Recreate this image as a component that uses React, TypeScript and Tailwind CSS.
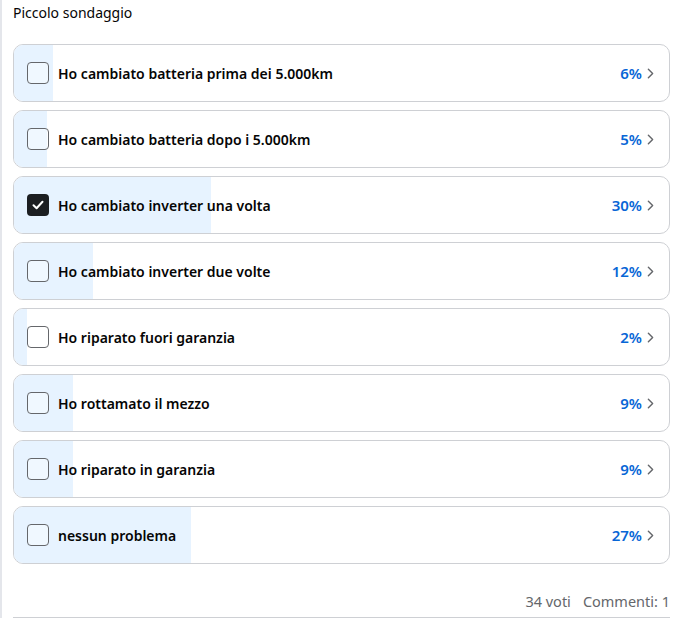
import { ChevronRight } from 'lucide-react';

interface PollOption {
  label: string;
  percent: number;
  checked?: boolean;
}

const options: PollOption[] = [
  { label: 'Ho cambiato batteria prima dei 5.000km', percent: 6 },
  { label: 'Ho cambiato batteria dopo i 5.000km', percent: 5 },
  { label: 'Ho cambiato inverter una volta', percent: 30, checked: true },
  { label: 'Ho cambiato inverter due volte', percent: 12 },
  { label: 'Ho riparato fuori garanzia', percent: 2 },
  { label: 'Ho rottamato il mezzo', percent: 9 },
  { label: 'Ho riparato in garanzia', percent: 9 },
  { label: 'nessun problema', percent: 27 },
];

function Checkbox({ checked }: { checked?: boolean }) {
  if (checked) {
    return (
      <div className="w-[22px] h-[22px] rounded-[4px] bg-[#1c1e21] flex items-center justify-center shrink-0">
        <svg width="14" height="14" viewBox="0 0 14 14" fill="none">
          <path d="M2.5 7.2 L5.6 10.2 L11.5 3.8" stroke="white" strokeWidth="2" strokeLinecap="round" strokeLinejoin="round" />
        </svg>
      </div>
    );
  }
  return <div className="w-[22px] h-[22px] rounded-[4px] border-[1.5px] border-[#65676b] bg-white/40 shrink-0" />;
}

function OptionRow({ option }: { option: PollOption }) {
  return (
    <div className="relative h-[58px] rounded-[10px] border border-[#ced0d4] overflow-hidden">
      {/* result bar */}
      <div className="absolute inset-y-0 left-0 bg-[#e7f3ff]" style={{ width: `${option.percent}%` }} />
      <div className="relative flex items-center h-full pl-[13px] pr-[10px]">
        <Checkbox checked={option.checked} />
        <span className="ml-[9px] text-[14px] font-semibold text-[#050505] flex-1">{option.label}</span>
        <span className="text-[15px] font-semibold text-[#0866d6]">{option.percent}%</span>
        <ChevronRight size={17} strokeWidth={2} className="text-[#65676b]" />
      </div>
    </div>
  );
}

export default function App() {
  return (
    <div
      className="w-[681px] h-[618px] bg-white border-l-2 border-[#e4e6eb] overflow-hidden"
      style={{ fontFamily: '"Noto Sans", "Open Sans", sans-serif' }}
    >
      <div className="pl-[11px] pr-[11px]">
        <div className="pt-[2px] text-[14px] text-[#050505] h-[44px]">Piccolo sondaggio</div>
        <div className="flex flex-col gap-[8px]">
          {options.map((o) => (
            <OptionRow key={o.label} option={o} />
          ))}
        </div>
        <div className="flex justify-end gap-[12px] pt-[27px] pb-[4px] text-[14.5px] text-[#65676b] border-b border-[#ced0d4]">
          <span>34 voti</span>
          <span>Commenti: 1</span>
        </div>
      </div>
    </div>
  );
}
